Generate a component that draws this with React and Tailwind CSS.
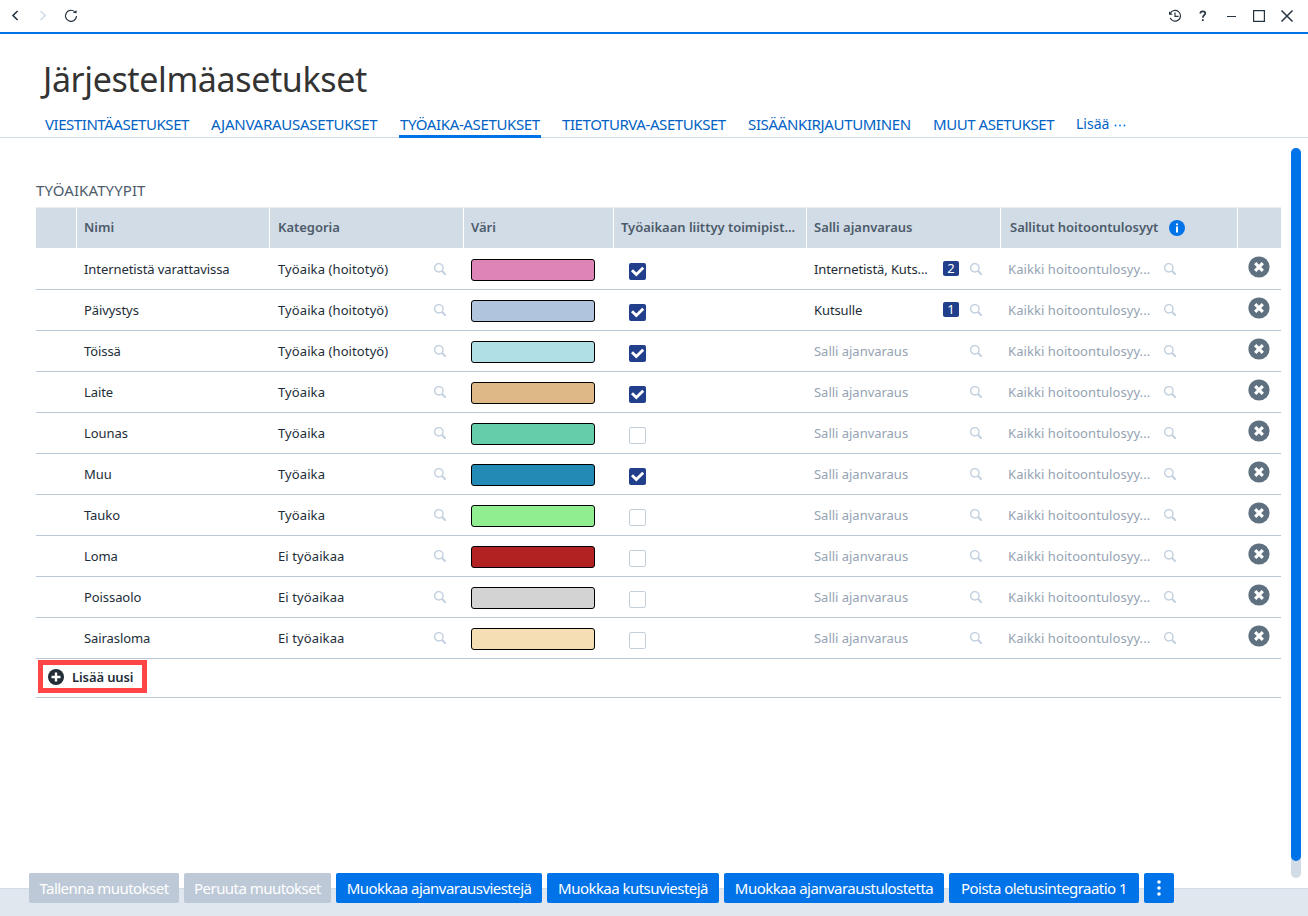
import React from "react";

const tabs = [
  { label: "VIESTINTÄASETUKSET", width: "w-[144px] tracking-[-0.45px]" },
  { label: "AJANVARAUSASETUKSET", width: "w-[167px] tracking-[-0.25px]" },
  { label: "TYÖAIKA-ASETUKSET", width: "w-[140px] tracking-[-0.37px]", active: true },
  { label: "TIETOTURVA-ASETUKSET", width: "w-[164px] tracking-[-0.42px]" },
  { label: "SISÄÄNKIRJAUTUMINEN", width: "w-[163px] tracking-[-0.36px]" },
  { label: "MUUT ASETUKSET", width: "w-[121px] tracking-[-0.45px]" },
];

const rows = [
  { name: "Internetistä varattavissa", category: "Työaika (hoitotyö)", color: "bg-[#de85b8]", checked: true, booking: "Internetistä, Kuts...", count: 2 },
  { name: "Päivystys", category: "Työaika (hoitotyö)", color: "bg-[#b0c4de]", checked: true, booking: "Kutsulle", count: 1 },
  { name: "Töissä", category: "Työaika (hoitotyö)", color: "bg-[#b0e0e6]", checked: true },
  { name: "Laite", category: "Työaika", color: "bg-[#deb887]", checked: true },
  { name: "Lounas", category: "Työaika", color: "bg-[#66cdaa]" },
  { name: "Muu", category: "Työaika", color: "bg-[#2389b5]", checked: true },
  { name: "Tauko", category: "Työaika", color: "bg-[#90ee90]" },
  { name: "Loma", category: "Ei työaikaa", color: "bg-[#b22222]" },
  { name: "Poissaolo", category: "Ei työaikaa", color: "bg-[#d3d3d3]" },
  { name: "Sairasloma", category: "Ei työaikaa", color: "bg-[#f5deb3]" },
];

const buttons = [
  { label: "Tallenna muutokset", width: "w-[150px]", disabled: true },
  { label: "Peruuta muutokset", width: "w-[147px]", disabled: true },
  { label: "Muokkaa ajanvarausviestejä", width: "w-[206px]" },
  { label: "Muokkaa kutsuviestejä", width: "w-[172px]" },
  { label: "Muokkaa ajanvaraustulostetta", width: "w-[220px]" },
  { label: "Poista oletusintegraatio 1", width: "w-[190px]" },
];

const columns =
  "grid grid-cols-[40px_193px_194px_150px_193px_194px_237px_44px]";

const SearchIcon = () => (
  <svg className="block h-3 w-3 shrink-0" viewBox="0 0 12 12" fill="none" stroke="#c3d0de">
    <circle cx="4.8" cy="4.8" r="4.2" strokeWidth="1.4" />
    <path d="M7.8 7.8L11.8 11.8" strokeWidth="2" />
  </svg>
);

const TopBar = () => (
  <div className="flex h-[34px] justify-between border-b-2 border-[#0073e9] text-[#263340]">
    <div className="flex items-center">
      <svg className="ml-2 h-8 w-14" viewBox="8 0 56 32" fill="none" strokeWidth="1.6">
        <path d="M17.6 11L13 15.5L17.6 20" stroke="#263340" />
        <path d="M40.5 11L45.2 15.5L40.5 20" stroke="#d1dce7" />
      </svg>
      <svg className="h-8 w-4" viewBox="64 0 16 32" fill="none" stroke="#263340" strokeWidth="1.2">
        <path d="M74.6 11.6A5.5 5.5 0 1 0 76.5 16" />
        <path d="M72.8 12.8L76.6 13.2V10.2Z" fill="#263340" stroke="none" />
      </svg>
    </div>
    <svg className="h-8 w-[148px]" viewBox="1160 0 148 32" fill="none" stroke="#263340" strokeWidth="1.2">
      <path d="M1170.3 13.3A5.4 5.4 0 1 1 1170.2 18" />
      <path d="M1169 11.2V14.8H1172.8Z" fill="#263340" stroke="none" />
      <path d="M1175 12.6V16.4H1178.6" />
      <path d="M1200.3 13.4C1200.3 10.7 1205.3 10.6 1205.3 13.3C1205.3 15.3 1202.8 15.2 1202.8 17.8" strokeWidth="1.7" />
      <path d="M1201.9 19.2H1203.7V21H1201.9Z" fill="#263340" stroke="none" />
      <path d="M1227 16.5H1236" strokeWidth="1" />
      <path d="M1253.6 10.6H1264.4V21.4H1253.6Z" />
      <path d="M1281.5 10.5L1292.5 21.5M1292.5 10.5L1281.5 21.5" strokeWidth="1.5" />
    </svg>
  </div>
);

const HeaderCell = ({ children }) => (
  <div className="flex h-10 items-center border-l border-white bg-[#d1dce6] pl-[7px] text-[13px] font-semibold tracking-[-0.02px] whitespace-nowrap text-[#4d5b6a]">
    {children}
  </div>
);

const Row = ({ row }) => (
  <div className={`${columns} h-[41px] border-b border-[#b9c8d6] text-[13px] leading-10 whitespace-nowrap text-[#222d38]`}>
    <div />
    <div className="pl-2 tracking-[-0.08px]">{row.name}</div>
    <div className="flex items-center justify-between pr-[17px] pl-[9px] tracking-[0.1px]">
      {row.category}
      <SearchIcon />
    </div>
    <div className="pt-2.5 pl-2">
      <div className={`h-[22px] w-[124px] rounded-[3px] border border-black ${row.color}`} />
    </div>
    <div className="pt-3.5 pl-4">
      {row.checked ? (
        <div className="h-[17px] w-[17px] rounded-[2px] bg-[#223f8c]">
          <svg className="block h-[17px] w-[17px]" viewBox="0 0 17 17" fill="none">
            <path d="M3 7.3L7.3 11.5L14.2 4.8" stroke="#fff" strokeWidth="2.9" />
          </svg>
        </div>
      ) : (
        <div className="h-[17px] w-[17px] rounded-[2px] border border-[#c3d0dc]" />
      )}
    </div>
    <div className="flex items-center pr-[18px] pl-2">
      <span className={row.booking ? "flex-1 tracking-[-0.1px]" : "flex-1 tracking-[-0.02px] text-[#95a3b3]"}>
        {row.booking || "Salli ajanvaraus"}
      </span>
      {row.count && (
        <span className="mr-[11px] mb-0.5 h-[15px] w-4 rounded-[2px] bg-[#223f8c] text-center text-[13px] leading-[15px] text-white">
          {row.count}
        </span>
      )}
      <SearchIcon />
    </div>
    <div className="flex items-center pl-2 tracking-[0.08px] text-[#95a3b3]">
      <span className="w-[156px]">Kaikki hoitoontulosyy...</span>
      <SearchIcon />
    </div>
    <div className="pt-[7px] pl-[11px]">
      <svg className="block h-[22px] w-[22px]" viewBox="0 0 22 22">
        <circle cx="11" cy="11" r="10.6" fill="#5f7181" />
        <path d="M7.2 7.2L14.8 14.8M14.8 7.2L7.2 14.8" stroke="#fff" strokeWidth="3.2" />
      </svg>
    </div>
  </div>
);

const App = () => {
  return (
    <div className="relative flex h-[916px] w-[1308px] flex-col overflow-hidden bg-white font-['Noto_Sans',sans-serif]">
      <TopBar />

      <div className="h-[104px] border-b border-[#d1dce6]">
        <h1 className="ml-[43px] pt-5 text-[34px] leading-[50px] tracking-[-0.38px] whitespace-nowrap text-[#333]">
          Järjestelmäasetukset
        </h1>
        <div className="mt-[9px] ml-[45px] flex gap-[22px] text-[15px] whitespace-nowrap text-[#0062c4]">
          {tabs.map((tab) => (
            <div key={tab.label} className={`relative h-[25px] leading-[22px] ${tab.width}`}>
              {tab.label}
              {tab.active && (
                <div className="absolute -right-px bottom-0 -left-px h-[3px] bg-[#0073e9]" />
              )}
            </div>
          ))}
          <div className="flex h-[22px] items-center gap-1 text-[14px] leading-[22px]">
            Lisää
            <svg className="mt-0.5 h-[3px] w-3.5" viewBox="0 0 14 3" fill="#0073e9">
              <circle cx="2.5" cy="1.5" r="0.9" />
              <circle cx="7" cy="1.5" r="0.9" />
              <circle cx="11.5" cy="1.5" r="0.9" />
            </svg>
          </div>
        </div>
      </div>

      <div className="flex-1 pt-[42px] pl-9">
        <h2 className="h-[27px] text-[15px] leading-5 tracking-[0.1px] text-[#4d5b6a]">TYÖAIKATYYPIT</h2>
        <div className="w-[1245px]">
          <div className={`${columns} mb-px border-t border-[#e8edf2]`}>
            <div className="bg-[#d1dce6]" />
            <HeaderCell>Nimi</HeaderCell>
            <HeaderCell>
              <span className="ml-px">Kategoria</span>
            </HeaderCell>
            <HeaderCell>Väri</HeaderCell>
            <HeaderCell>Työaikaan liittyy toimipist...</HeaderCell>
            <HeaderCell>Salli ajanvaraus</HeaderCell>
            <HeaderCell>
              <span className="ml-0.5 w-[159px]">Sallitut hoitoontulosyyt</span>
              <svg className="h-4 w-4" viewBox="0 0 16 16">
                <circle cx="8" cy="8" r="8" fill="#0073e9" />
                <path d="M7 3.4H9V5.2H7ZM7 6.4H9V12.6H7Z" fill="#fff" />
              </svg>
            </HeaderCell>
            <HeaderCell />
          </div>
          {rows.map((row) => (
            <Row key={row.name} row={row} />
          ))}
          <div className="h-[39px] border-b border-[#b9c8d6] pt-px pl-0.5">
            <div className="flex h-[33px] w-[109px] items-center gap-2 border-[5px] border-[#ff4545] pl-[5px] text-[13px] font-semibold tracking-[-0.1px] whitespace-nowrap text-[#222d38]">
              <svg className="h-4 w-4 shrink-0" viewBox="0 0 16 16">
                <circle cx="8" cy="8" r="8" fill="#222d38" />
                <path d="M8 3.5V12.5M3.5 8H12.5" stroke="#fff" strokeWidth="2.4" />
              </svg>
              <span className="pt-0.5">Lisää uusi</span>
            </div>
          </div>
        </div>
      </div>

      <div className="h-7 border-t border-[#d1dce6] bg-[#e0e7ee]">
        <div className="relative -top-4 ml-[29px] flex gap-[5px]">
          {buttons.map((button) => (
            <button
              key={button.label}
              className={`h-[30px] rounded-[2px] text-[15px] tracking-[-0.54px] whitespace-nowrap text-white ${button.width} ${
                button.disabled ? "bg-[#bdc9d7]" : "bg-[#0073e9]"
              }`}
            >
              {button.label}
            </button>
          ))}
          <button className="flex h-[30px] w-[30px] items-center justify-center rounded-[2px] bg-[#0073e9]">
            <svg className="h-4 w-1" viewBox="0 0 4 16" fill="#fff">
              <circle cx="2" cy="2" r="1.8" />
              <circle cx="2" cy="8" r="1.8" />
              <circle cx="2" cy="14" r="1.8" />
            </svg>
          </button>
        </div>
      </div>

      <div className="absolute top-[148px] right-[7px] h-[730px] w-2.5 rounded-full bg-[#d1dce6]">
        <div className="h-[713px] rounded-full bg-[#0073e9]" />
      </div>
    </div>
  );
};

export default App;
